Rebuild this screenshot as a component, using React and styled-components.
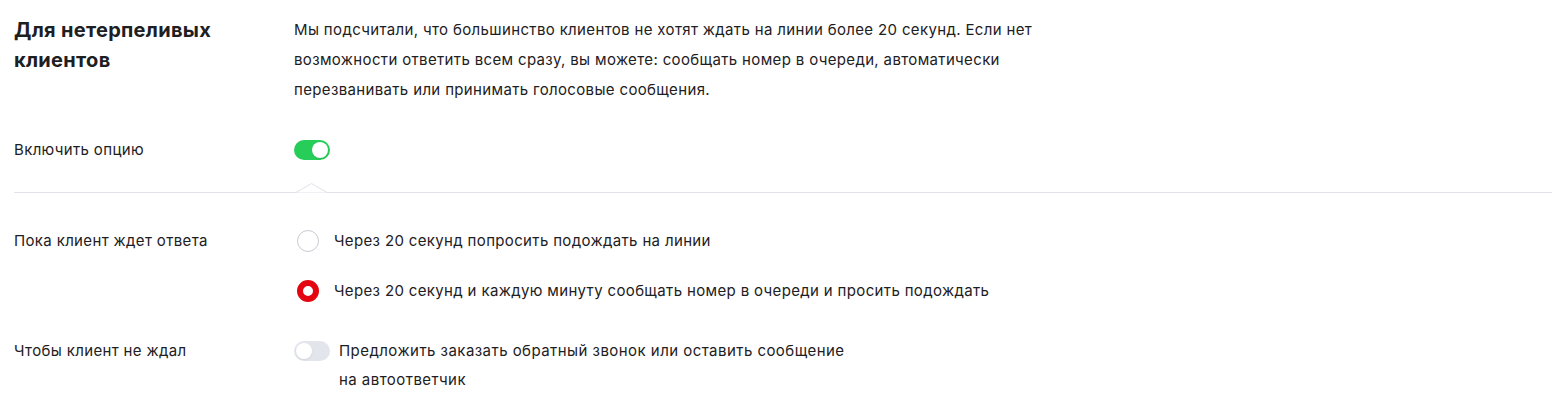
import React, { useState } from "react";
import styled, { createGlobalStyle } from "styled-components";

const Global = createGlobalStyle`
  html, body { margin: 0; padding: 0; background: #fff; }
  body { font-family: Inter, "Noto Sans", sans-serif; color: #1d2023; letter-spacing: 0.35px; }
  * { box-sizing: border-box; }
`;

const Page = styled.div`
  padding: 15px 0 0 14px;
  width: 1552px;
`;

const Row = styled.div`
  display: grid;
  grid-template-columns: 280px 1fr;
  align-items: ${(p) => (p.$center ? "center" : "start")};
  margin-top: ${(p) => p.$mt || 0}px;
`;

const Heading = styled.h2`
  margin: 0;
  font-size: 20px;
  line-height: 30px;
  font-weight: 700;
  letter-spacing: 0.3px;
  max-width: 250px;
`;

const Description = styled.p`
  margin: 0;
  font-size: 15px;
  line-height: 30px;
`;

const Label = styled.div`
  font-size: 15px;
  line-height: 30px;
`;

const SwitchTrack = styled.button`
  position: relative;
  width: 36px;
  height: 20px;
  border: none;
  border-radius: 10px;
  padding: 0;
  flex-shrink: 0;
  cursor: pointer;
  background: ${(p) => (p.$on ? "#26cd58" : "#e2e5eb")};
  &::after {
    content: "";
    position: absolute;
    top: 2px;
    left: ${(p) => (p.$on ? "18px" : "2px")};
    width: 16px;
    height: 16px;
    border-radius: 50%;
    background: #fff;
    box-shadow: 0 1px 2px rgba(0, 0, 0, 0.08);
  }
`;

const SwitchCell = styled.div`
  display: flex;
`;

const Divider = styled.div`
  position: relative;
  height: 1px;
  background: #e1e3e8;
  margin-top: ${(p) => p.$mt}px;
`;

const Notch = styled.svg`
  position: absolute;
  left: 282px;
  top: -9px;
  width: 31px;
  height: 10px;
  overflow: visible;
`;

const RadioList = styled.div`
  display: flex;
  flex-direction: column;
  gap: 20px;
`;

const RadioItem = styled.label`
  display: flex;
  align-items: center;
  gap: 15px;
  font-size: 15px;
  line-height: 30px;
  cursor: pointer;
  padding-left: 3px;
`;

const RadioCircle = styled.span`
  width: 22px;
  height: 22px;
  border-radius: 50%;
  flex-shrink: 0;
  background: #fff;
  border: ${(p) => (p.$checked ? "6.5px solid #e30611" : "1.5px solid #c8cbd1")};
`;

const OptionLine = styled.div`
  display: flex;
  align-items: flex-start;
  gap: 9px;
  & > button {
    margin-top: 5px;
  }
`;

const OptionText = styled.div`
  font-size: 15px;
  line-height: 29px;
  letter-spacing: 0.45px;
  max-width: 560px;
`;

export default function App() {
  const [on, setOn] = useState(true);
  const [choice, setChoice] = useState(1);
  const [callback, setCallback] = useState(false);
  return (
    <Page>
      <Global />
      <Row>
        <Heading>Для нетерпеливых клиентов</Heading>
        <Description>
          Мы подсчитали, что большинство клиентов не хотят ждать на линии более 20 секунд. Если нет
          <br />
          возможности ответить всем сразу, вы можете: сообщать номер в очереди, автоматически
          <br />
          перезванивать или принимать голосовые сообщения.
        </Description>
      </Row>
      <Row $center $mt={30}>
        <Label>Включить опцию</Label>
        <SwitchCell>
          <SwitchTrack $on={on} onClick={() => setOn(!on)} aria-label="toggle" />
        </SwitchCell>
      </Row>
      <Divider $mt={27}>
        <Notch viewBox="0 0 31 10">
          <polyline points="0,9.5 15.5,0.5 31,9.5" fill="#fff" stroke="#e1e3e8" strokeWidth="1" />
        </Notch>
      </Divider>
      <Row $mt={33}>
        <Label>Пока клиент ждет ответа</Label>
        <RadioList>
          <RadioItem onClick={() => setChoice(0)}>
            <RadioCircle $checked={choice === 0} />
            Через 20 секунд попросить подождать на линии
          </RadioItem>
          <RadioItem onClick={() => setChoice(1)}>
            <RadioCircle $checked={choice === 1} />
            Через 20 секунд и каждую минуту сообщать номер в очереди и просить подождать
          </RadioItem>
        </RadioList>
      </Row>
      <Row $mt={30}>
        <Label>Чтобы клиент не ждал</Label>
        <OptionLine>
          <SwitchTrack $on={callback} onClick={() => setCallback(!callback)} aria-label="toggle" />
          <OptionText>
            Предложить заказать обратный звонок или оставить сообщение
            <br />
            на автоответчик
          </OptionText>
        </OptionLine>
      </Row>
    </Page>
  );
}
